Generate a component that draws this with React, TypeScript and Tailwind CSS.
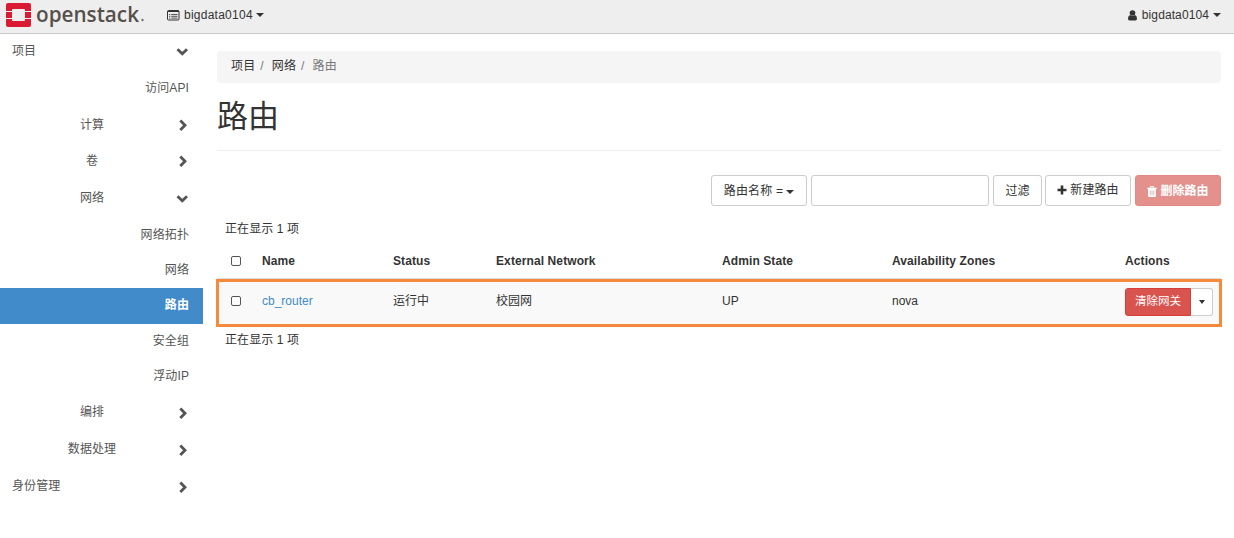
import type { ReactNode } from "react";

type NavItem = {
  label: string;
  level: 1 | 2 | 3;
  height: string;
  state?: "open" | "closed" | "active";
};

const navItems: NavItem[] = [
  { label: "项目", level: 1, height: "h-[35px] pb-[1px]", state: "open" },
  { label: "访问API", level: 3, height: "h-[37px] pt-[1px]" },
  { label: "计算", level: 2, height: "h-[37px] pt-[1px]", state: "closed" },
  { label: "卷", level: 2, height: "h-[36px]", state: "closed" },
  { label: "网络", level: 2, height: "h-[37px] pt-[1px]", state: "open" },
  { label: "网络拓扑", level: 3, height: "h-[37px] pt-[1px]" },
  { label: "网络", level: 3, height: "h-[35px]" },
  { label: "路由", level: 3, height: "h-[36px] pb-[2px]", state: "active" },
  { label: "安全组", level: 3, height: "h-[35px]" },
  { label: "浮动IP", level: 3, height: "h-[35px]" },
  { label: "编排", level: 2, height: "h-[37px]", state: "closed" },
  { label: "数据处理", level: 2, height: "h-[37px]", state: "closed" },
  { label: "身份管理", level: 1, height: "h-[37px]", state: "closed" },
];

const columns =
  "grid grid-cols-[45px_131px_103px_226px_170px_233px_96px] items-center";

const Caret = ({ className = "border-x-4 border-t-4" }: { className?: string }) => (
  <span
    className={`inline-block border-x-transparent border-t-[#333] ${className}`}
  />
);

const Chevron = ({ open }: { open: boolean }) => (
  <svg
    viewBox="0 0 12 12"
    className="h-[12px] w-[12px] shrink-0 fill-none stroke-[#555] stroke-[2.8]"
  >
    {open ? (
      <path d="M1.500 4.200L6.300 8.800l4.700-4.600" />
    ) : (
      <path d="M4.300 1.500L9 6.200l-4.700 4.700" />
    )}
  </svg>
);

const Logo = () => (
  <svg
    width="146"
    height="33"
    viewBox="0 0 146 33"
    className="shrink-0 overflow-visible"
  >
    <g fill="#da1a32">
      <path d="M8 3h21a2 2 0 0 1 2 2v6h-6v-1a1 1 0 0 0-1-1H13a1 1 0 0 0-1 1v1H6V5a2 2 0 0 1 2-2z" />
      <path d="M6 12h6v6H6zM25 12h6v6h-6z" />
      <path d="M6 19h6v1a1 1 0 0 0 1 1h11a1 1 0 0 0 1-1v-1h6v6a2 2 0 0 1-2 2H8a2 2 0 0 1-2-2z" />
    </g>
    <text
      x="36"
      y="21.500"
      textLength="103"
      lengthAdjust="spacingAndGlyphs"
      className="fill-[#56504a] font-['Open_Sans',sans-serif] text-[22px] leading-none font-semibold"
    >
      openstack
    </text>
    <circle cx="142.500" cy="20" r="1.2" fill="#77716c" />
  </svg>
);

const ListIcon = () => (
  <svg width="13" height="11" viewBox="0 0 13 11" className="shrink-0">
    <rect x="0.5" y="0.5" width="11.5" height="9.5" rx="1" fill="none" stroke="#333" />
    <path d="M0.5 1.5h11.5" stroke="#333" />
    <path d="M2 4.5h1.3M4.2 4.5h6.3M2 6.3h1.3M4.2 6.3h6.3M2 8.1h1.3M4.2 8.1h6.3" stroke="#444" strokeWidth="0.9" />
  </svg>
);

const UserIcon = () => (
  <svg width="9" height="11" viewBox="0 0 9 11" className="shrink-0 fill-[#333]">
    <circle cx="4.5" cy="3" r="2.8" />
    <path d="M2 5q2.5 2 5 0 2 .6 2 3.8Q9 10.500 7.500 10.500h-6Q0 10.500 0 8.800 0 5.600 2 5z" />
  </svg>
);

const PlusIcon = () => (
  <svg width="10" height="10" viewBox="0 0 10 10" className="mr-[3px]">
    <path d="M5 0.500v9M0.500 5h9" stroke="#333" strokeWidth="2.6" />
  </svg>
);

const TrashIcon = () => (
  <svg width="10" height="11" viewBox="0 0 10 11" className="mr-[3px]">
    <path d="M3.300 2V0.700h3.400V2" fill="none" stroke="white" />
    <path d="M0.300 1.700h9.400v1.200H0.300zM1 3h8v6.700q0 1.300-1.200 1.300H2.200Q1 11 1 9.700z" fill="white" />
    <path d="M3.300 4.300v5M5 4.300v5M6.700 4.300v5" stroke="#e4908d" strokeWidth="0.600" />
  </svg>
);

const Button = ({ children, className }: { children: ReactNode; className: string }) => (
  <button
    className={`flex h-[31px] shrink-0 items-center justify-center rounded-[3px] border whitespace-nowrap ${className}`}
  >
    {children}
  </button>
);

const Checkbox = () => (
  <span className="ml-[14px] block h-[10px] w-[10px] rounded-[2px] border border-[#555] bg-white" />
);

const Header = () => (
  <header className="flex h-[34px] items-center justify-between border-b border-[#c8c8c8] bg-[#eee] pr-[13px]">
    <div className="flex items-center">
      <Logo />
      <div className="ml-[21px] flex items-center pb-[3px]">
        <ListIcon />
        <span className="ml-1 tracking-[0.25px]">bigdata0104</span>
        <Caret className="ml-[3px] border-x-4 border-t-4" />
      </div>
    </div>
    <div className="flex items-center pb-[3px]">
      <UserIcon />
      <span className="ml-[5px] tracking-[0.1px]">bigdata0104</span>
      <Caret className="ml-1 border-x-4 border-t-4" />
    </div>
  </header>
);

const Sidebar = () => (
  <nav className="w-[203px] shrink-0 tracking-[0.1px] text-[#555]">
    {navItems.map(({ label, level, height, state }, i) => (
      <div
        key={i}
        className={`flex items-center ${height} ${
          state === "active" ? "bg-[#428bca] font-bold text-white" : ""
        } ${level === 3 ? "justify-end pr-[14px]" : "justify-between pr-[15px]"}`}
      >
        <span
          className={
            level === 1 ? "pl-[12px]" : level === 2 ? "flex-1 pl-[8px] text-center" : ""
          }
        >
          {label}
        </span>
        {(state === "open" || state === "closed") && (
          <Chevron open={state === "open"} />
        )}
      </div>
    ))}
  </nav>
);

const Toolbar = () => (
  <div className="mt-[24px] flex justify-end">
    <Button className="mr-1 w-[96px] border-[#ccc] bg-white pt-[2px] tracking-[0.2px]">
      路由名称 =<Caret className="ml-[3px] border-x-4 border-t-4" />
    </Button>
    <input className="mr-1 h-[31px] w-[178px] rounded-[3px] border border-[#ccc] bg-white px-2" />
    <Button className="mr-[3px] w-[49px] border-[#ccc] bg-white pt-[2px]">过滤</Button>
    <Button className="mr-1 w-[86px] border-[#ccc] bg-white pb-[1px] tracking-[0.1px]">
      <PlusIcon />
      新建路由
    </Button>
    <Button className="w-[86px] border-[#e18985] bg-[#e4908d] pt-[1px] font-bold text-white">
      <TrashIcon />
      删除路由
    </Button>
  </div>
);

const RouterTable = () => (
  <section>
    <p className="mt-[13px] pl-2 leading-[20px] tracking-[0.1px]">正在显示 1 项</p>
    <div className={`${columns} mt-[4px] h-[36px] font-bold tracking-[0.1px]`}>
      <Checkbox />
      <span>Name</span>
      <span>Status</span>
      <span>External Network</span>
      <span>Admin State</span>
      <span>Availability Zones</span>
      <span>Actions</span>
    </div>
    <div className={`${columns} relative mt-[-1px] h-[47px] border-y border-[#ddd] bg-[#f9f9f9]`}>
      <div className="pb-[1px]">
        <Checkbox />
      </div>
      <a className="text-[#428bca]">cb_router</a>
      <span>运行中</span>
      <span>校园网</span>
      <span>UP</span>
      <span>nova</span>
      <div className="flex h-[28px]">
        <button className="w-[66px] rounded-l-[3px] border border-[#d43f3a] bg-[#d9534f] text-[11.500px] text-white">
          清除网关
        </button>
        <button className="flex w-[22px] items-center justify-center rounded-r-[3px] border border-l-0 border-[#ccc] bg-white">
          <Caret className="border-x-[3.500px] border-t-4" />
        </button>
      </div>
      {/* highlighted row frame */}
      <div className="pointer-events-none absolute -inset-x-px top-0 -bottom-[3px] border-[3px] border-[#f58a3c]" />
    </div>
    <p className="mt-[5px] pl-2 leading-[20px] tracking-[0.1px]">正在显示 1 项</p>
  </section>
);

export default function App() {
  return (
    <div className="min-h-[538px] bg-white font-['Liberation_Sans','Noto_Sans_CJK_SC',sans-serif] text-[12px] leading-[17px] text-[#333]">
      <Header />
      <div className="flex">
        <Sidebar />
        <main className="mr-[13px] ml-[14px] min-w-0 flex-1">
          <div className="mt-[17px] flex h-[32px] items-center rounded-[4px] bg-[#f5f5f5] pb-[2px] pl-[14px] tracking-[0.15px]">
            <span>项目</span>
            <span className="mx-[5px] text-[#777]">/</span>
            <span className="ml-[3px]">网络</span>
            <span className="mx-[5px] text-[#777]">/</span>
            <span className="ml-[3px] text-[#777]">路由</span>
          </div>
          <h1 className="flex h-[68px] items-center border-b border-[#eee] text-[31px] leading-[34px]">
            路由
          </h1>
          <Toolbar />
          <RouterTable />
        </main>
      </div>
    </div>
  );
}
